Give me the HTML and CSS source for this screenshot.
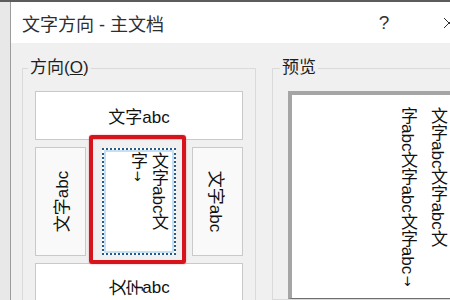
FILE: index.html
```html
<!DOCTYPE html>
<html lang="zh-CN">
<head>
<meta charset="utf-8">
<title>文字方向 - 主文档</title>
<link rel="stylesheet" href="styles.css">
</head>
<body>
<div class="strip"></div>
<div class="window">
  <div class="titlebar">
    <span class="title">文字方向 - 主文档</span>
    <span class="help">?</span>
    <span class="close"><svg width="12" height="12" viewBox="0 0 12 12"><path d="M1 1L11 11M11 1L1 11" stroke="#333" stroke-width="1" fill="none"/></svg></span>
  </div>
  <div class="content">
    <fieldset class="group orient">
      <legend>方向(<u>O</u>)</legend>
      <div class="options">
        <div class="opt wide">文字abc</div>
        <div class="row">
          <div class="opt side"><span class="rot-ccw">文字abc</span></div>
          <div class="sel-cell">
            <div class="opt selected"><div class="vtext">文字abc文<br>字<span class="mark">↓</span></div></div>
            <div class="callout"></div>
          </div>
          <div class="opt side"><span class="rot-cw">文字abc</span></div>
        </div>
        <div class="opt wide"><span class="cr">文</span><span class="cr">字</span>abc</div>
      </div>
    </fieldset>
    <fieldset class="group preview">
      <legend>预览</legend>
      <div class="pbox"><div class="vtext big">文字abc文字abc文<br>字abc文字abc文字abc<span class="mark">↓</span></div></div>
    </fieldset>
  </div>
</div>
</body>
</html>
```
FILE: styles.css
```css
html, body { margin: 0; height: 100%; overflow: hidden; }
body {
  background: #e8e8e8;
  font-family: "Liberation Sans", "Noto Sans CJK SC", sans-serif;
  color: #222;
}
.strip { height: 2px; background: #5c5c5c; }
.window {
  margin-left: 10px;
  width: 470px;
  height: 298px;
  border-left: 1px solid #9c9c9c;
  background: #f0f0f0;
}
.titlebar {
  height: 41px;
  background: #fff;
  display: flex;
  align-items: center;
  padding: 0 9px 0 11px;
  font-size: 18px;
  color: #2e2e2e;
}
.title { flex: 1; white-space: nowrap; }
.help { width: 46px; text-align: center; font-size: 19px; color: #333; }
.close { width: 46px; margin-left: 19px; display: flex; justify-content: center; }
.content {
  display: flex;
  align-items: flex-start;
  gap: 16px;
  padding: 14px 0 0 11px;
}
fieldset.group {
  margin: 0;
  border: 1px solid #dadada;
  box-sizing: border-box;
  min-width: 0;
}
legend {
  font-size: 17px;
  line-height: 22px;
  padding: 0 2px;
  color: #1e1e1e;
}
.orient { width: 234px; padding: 12px 12px 0 12px; }
.orient legend { margin-left: -7px; }
.preview { padding: 12px 0 0 15px; }
.preview legend { margin-left: -8px; }

.options { display: flex; flex-direction: column; gap: 7px; }
.opt {
  border: 1px solid #c9c9c9;
  background: #fff;
  box-sizing: border-box;
  display: flex;
  align-items: center;
  justify-content: center;
  font-size: 17px;
  white-space: nowrap;
  color: #111;
}
.wide { height: 49px; }
.row {
  display: grid;
  grid-template-columns: 51px 1fr 51px;
  gap: 4px;
  height: 109px;
}
.side { background: #f9f9f9; }
.rot-ccw { display: inline-block; transform: rotate(-90deg); }
.rot-cw { display: inline-block; transform: rotate(90deg); }
.cr { display: inline-block; transform: rotate(-90deg); }

.sel-cell { position: relative; display: flex; padding: 1px 12px; }
.selected {
  flex: 1;
  border: 2px dotted #2a5a84;
  box-shadow: inset 0 0 0 2px #c4e0f5;
  background: #fff;
  align-items: flex-start;
  justify-content: flex-end;
  padding: 2px 5px 2px 2px;
}
.callout {
  position: absolute;
  left: -1px;
  right: 2px;
  top: -12px;
  bottom: -8px;
  border: 4px solid #d7141b;
  border-radius: 3px;
  box-shadow: 0 0 2px rgba(215, 20, 27, 0.4);
}
.vtext { writing-mode: vertical-rl; line-height: 21px; font-size: 17px; white-space: nowrap; }
.mark {
  text-orientation: upright;
  font-family: "DejaVu Sans", sans-serif;
  font-size: 13px;
}
.pbox {
  width: 170px;
  height: 208px;
  box-sizing: border-box;
  border-style: solid;
  border-width: 4px 1px 1px 4px;
  border-color: #a5a5a5 #dddddd #6e6e6e #a5a5a5;
  background: #fff;
  padding: 12px 5px 0 0;
  display: flex;
  justify-content: flex-end;
}
.big { line-height: 30px; color: #111; }
```
